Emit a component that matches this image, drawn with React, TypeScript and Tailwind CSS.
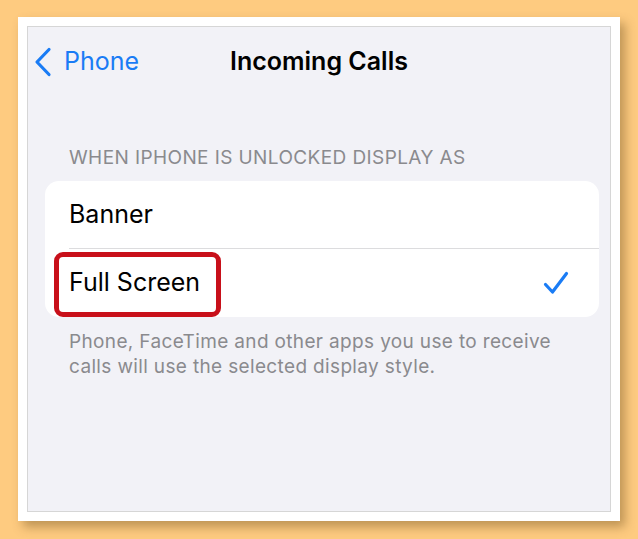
import React from "react";

const font = { fontFamily: 'Inter, "Noto Sans", sans-serif' };

const Chevron = () => (
  <svg width="20" height="30" viewBox="0 0 20 30" fill="none">
    <path d="M16 2.5 L4 15 L16 27.5" stroke="#1a7cf5" strokeWidth="3.2" strokeLinecap="round" strokeLinejoin="round" />
  </svg>
);

const Check = () => (
  <svg width="26" height="24" viewBox="0 0 26 24" fill="none">
    <path d="M2.5 13.5 L9.5 21 L23.5 2.5" stroke="#1a7cf5" strokeWidth="3.2" strokeLinecap="round" strokeLinejoin="round" />
  </svg>
);

export default function App() {
  return (
    <div className="w-[638px] h-[539px] bg-[#fecb80] pt-[17px] pl-[18px]" style={font}>
      <div className="w-[602px] h-[504px] bg-white p-[9px] shadow-[5px_6px_10px_rgba(110,80,30,0.45)]">
        <div className="w-full h-full border border-[#d6d6d6] bg-[#f2f2f7] flex flex-col">
          <div className="relative h-[70px] flex items-center">
            <div className="flex items-center pl-[5px] gap-[11px] text-[#1a7cf5] text-[25px]">
              <Chevron />
              <span>Phone</span>
            </div>
            <div className="absolute inset-0 flex items-center justify-center text-[25px] font-semibold text-black">
              Incoming Calls
            </div>
          </div>
          <div className="pl-[41px] mt-[50px] text-[19px] leading-[22px] tracking-[0.4px] text-[#8a8a8e] uppercase">
            When iPhone is unlocked display as
          </div>
          <div className="ml-[17px] mr-[11px] mt-[12px] bg-white rounded-[14px]">
            <div className="h-[67px] flex items-center pl-[24px] text-[25px] text-black">Banner</div>
            <div className="ml-[24px] h-px bg-[#dcdcde]" />
            <div className="h-[68px] flex items-center justify-between pl-[24px] pr-[30px] text-[25px] text-black relative">
              <span>Full Screen</span>
              <Check />
              <div className="absolute left-[9px] top-[3px] w-[167px] h-[65px] border-[5px] border-[#c8101a] rounded-[9px]" />
            </div>
          </div>
          <div className="pl-[41px] pr-[30px] mt-[12px] text-[19px] leading-[25px] tracking-[0.35px] text-[#8a8a8e]">
            Phone, FaceTime and other apps you use to receive calls will use the selected display style.
          </div>
        </div>
      </div>
    </div>
  );
}
